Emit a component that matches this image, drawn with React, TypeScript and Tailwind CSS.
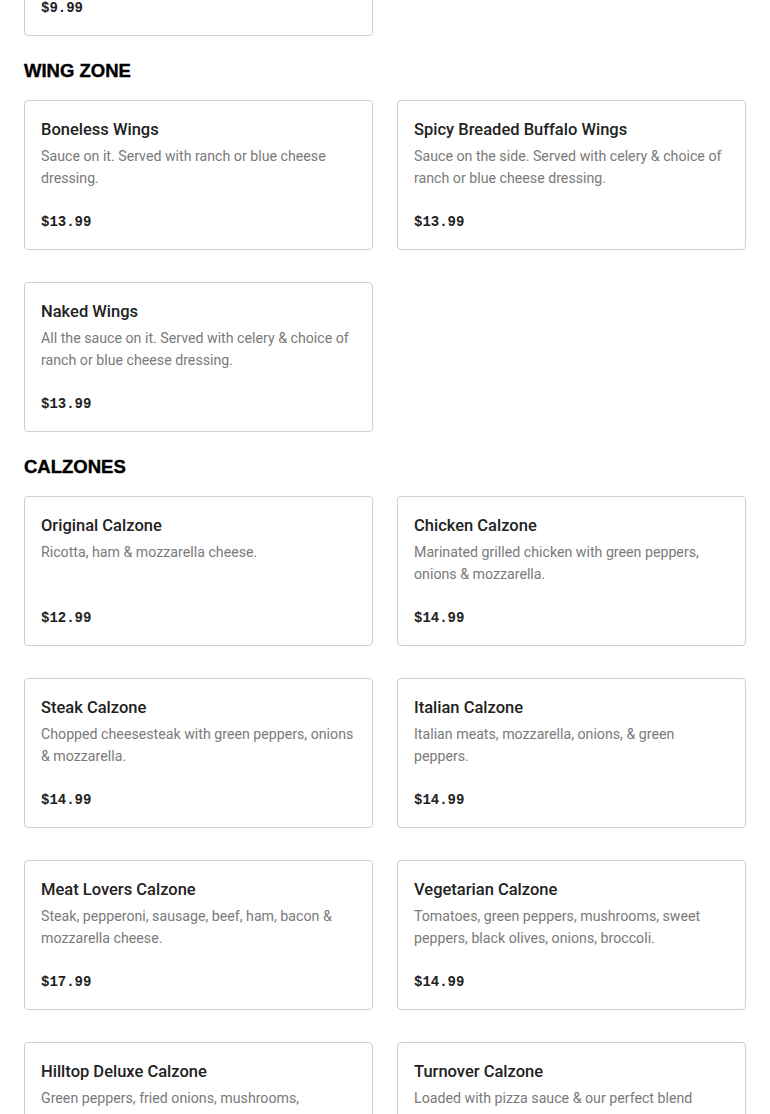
import React from "react";

type Item = { name: string; desc: string; price: string };

const wings: Item[] = [
  { name: "Boneless Wings", desc: "Sauce on it. Served with ranch or blue cheese dressing.", price: "$13.99" },
  { name: "Spicy Breaded Buffalo Wings", desc: "Sauce on the side. Served with celery & choice of ranch or blue cheese dressing.", price: "$13.99" },
  { name: "Naked Wings", desc: "All the sauce on it. Served with celery & choice of ranch or blue cheese dressing.", price: "$13.99" },
];

const calzones: Item[] = [
  { name: "Original Calzone", desc: "Ricotta, ham & mozzarella cheese.", price: "$12.99" },
  { name: "Chicken Calzone", desc: "Marinated grilled chicken with green peppers, onions & mozzarella.", price: "$14.99" },
  { name: "Steak Calzone", desc: "Chopped cheesesteak with green peppers, onions & mozzarella.", price: "$14.99" },
  { name: "Italian Calzone", desc: "Italian meats, mozzarella, onions, & green peppers.", price: "$14.99" },
  { name: "Meat Lovers Calzone", desc: "Steak, pepperoni, sausage, beef, ham, bacon & mozzarella cheese.", price: "$17.99" },
  { name: "Vegetarian Calzone", desc: "Tomatoes, green peppers, mushrooms, sweet peppers, black olives, onions, broccoli.", price: "$14.99" },
  { name: "Hilltop Deluxe Calzone", desc: "Green peppers, fried onions, mushrooms, sausage, pepperoni & mozzarella cheese.", price: "$16.99" },
  { name: "Turnover Calzone", desc: "Loaded with pizza sauce & our perfect blend cheeses.", price: "$11.99" },
];

function Card({ item }: { item: Item }) {
  return (
    <div className="h-[150px] flex flex-col rounded border border-[#cfcfcf] bg-white px-4 pt-[17px] pb-4">
      <div className="text-[16.5px] leading-6 font-medium text-[#222] font-['Roboto',sans-serif]">{item.name}</div>
      <div className="mt-[3px] text-[14.2px] leading-[22px] text-[#7a7a7a] font-['Roboto',sans-serif]">{item.desc}</div>
      <div className="mt-auto text-[14px] leading-[22px] font-bold text-[#222] font-['Liberation_Mono',monospace]">{item.price}</div>
    </div>
  );
}

function Section({ title, items }: { title: string; items: Item[] }) {
  return (
    <div>
      <h2 className="mt-[23px] mb-[17px] h-6 text-[18.5px] leading-6 font-black text-black font-['Liberation_Sans',sans-serif] [-webkit-text-stroke:0.4px_black]">
        {title}
      </h2>
      <div className="grid grid-cols-2 gap-x-6 gap-y-8">
        {items.map((it) => (
          <Card key={it.name} item={it} />
        ))}
      </div>
    </div>
  );
}

export default function App() {
  return (
    <div className="h-[1114px] overflow-hidden bg-white">
      <div className="px-6">
        <div className="grid grid-cols-2 gap-x-6 -mt-[114px]">
          <Card item={{ name: "Garlic Knots", desc: "Served with marinara.", price: "$9.99" }} />
        </div>
        <Section title="WING ZONE" items={wings} />
        <Section title="CALZONES" items={calzones} />
      </div>
    </div>
  );
}
